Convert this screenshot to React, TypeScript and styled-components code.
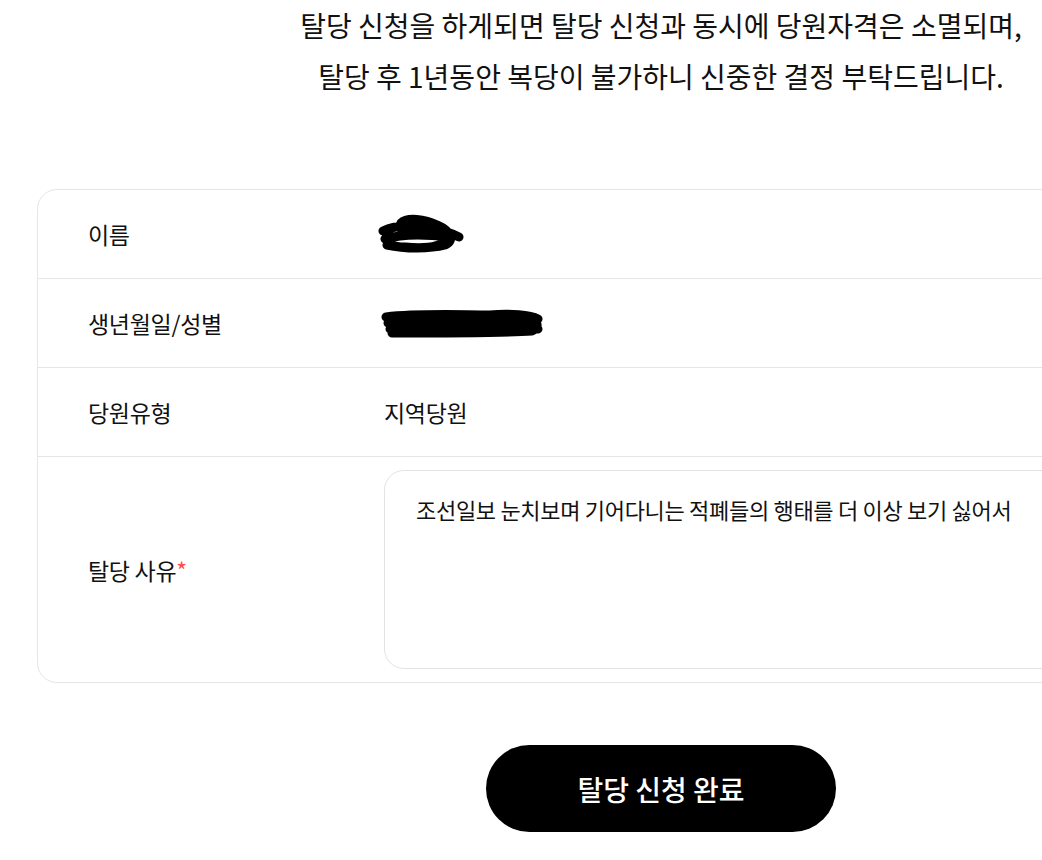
import React from "react";
import styled, { createGlobalStyle } from "styled-components";

const Global = createGlobalStyle`
  html, body { margin: 0; padding: 0; background: #fff; overflow: hidden; }
  body { font-family: "Noto Sans CJK KR", "Noto Sans", sans-serif; color: #111; }
`;

const Page = styled.div`
  width: 1248px;
  margin-left: 37px;
  display: flex;
  flex-direction: column;
  align-items: stretch;
`;

const Notice = styled.p`
  margin: 0 0 87px;
  text-align: center;
  font-size: 28px;
  line-height: 51px;
  letter-spacing: 0;
  color: #111;
`;

const Table = styled.div`
  border: 1px solid #e6e6e6;
  border-radius: 20px;
  display: flex;
  flex-direction: column;
`;

const Row = styled.div<{ $tall?: boolean }>`
  display: grid;
  grid-template-columns: 346px 1fr;
  align-items: center;
  min-height: ${(p) => (p.$tall ? "225px" : "88px")};
  & + & { border-top: 1px solid #e6e6e6; }
`;

const Label = styled.div`
  padding-left: 50px;
  font-size: 23px;
  letter-spacing: -0.3px;
`;

const Value = styled.div`
  font-size: 23px;
  letter-spacing: -0.3px;
  display: flex;
  align-items: center;
`;

const Req = styled.span`
  color: #ff4b4b;
`;

const Reason = styled.textarea`
  box-sizing: border-box;
  width: 100%;
  height: 199px;
  margin: 0;
  border: 1px solid #e3e3e3;
  border-radius: 20px;
  padding: 23px 31px;
  font-family: "Noto Sans CJK KR", "Noto Sans", sans-serif;
  font-size: 22px;
  line-height: 30px;
  letter-spacing: -0.3px;
  color: #111;
  resize: none;
  outline: none;
  display: block;
`;

const ButtonRow = styled.div`
  display: flex;
  justify-content: center;
  margin-top: 62px;
`;

const Submit = styled.button`
  width: 350px;
  height: 87px;
  border: none;
  border-radius: 44px;
  background: #000;
  color: #fff;
  font-family: "Noto Sans CJK KR", "Noto Sans", sans-serif;
  font-size: 28px;
  font-weight: 500;
  cursor: pointer;
`;

const Scribble = ({ w, h, d }: { w: number; h: number; d: string }) => (
  <svg width={w} height={h} viewBox={`0 0 ${w} ${h}`} style={{ display: "block" }}>
    <path d={d} fill="none" stroke="#000" strokeWidth={9} strokeLinecap="round" strokeLinejoin="round" />
  </svg>
);

export default function App() {
  return (
    <>
      <Global />
      <Page>
        <Notice>
          탈당 신청을 하게되면 탈당 신청과 동시에 당원자격은 소멸되며,
          <br />
          탈당 후 1년동안 복당이 불가하니 신중한 결정 부탁드립니다.
        </Notice>
        <Table>
          <Row>
            <Label>이름</Label>
            <Value style={{ marginLeft: -9 }}>
              <Scribble
                w={90}
                h={42}
                d="M8 18 C20 12 40 12 60 16 C72 18 80 22 84 24 M10 26 C30 20 55 22 75 24 M12 32 C30 36 55 36 70 32 C80 28 76 18 62 12 C50 6 32 4 26 10 C22 16 28 20 40 20 M14 22 C12 30 16 34 30 34 C50 36 66 34 74 26"
              />
            </Value>
          </Row>
          <Row>
            <Label>생년월일/성별</Label>
            <Value style={{ marginLeft: -4 }}>
              <Scribble
                w={165}
                h={32}
                d="M6 10 C40 6 80 8 110 8 C130 6 150 8 158 12 M8 16 C50 14 100 14 156 14 M10 22 C50 20 110 20 158 22 M12 26 C60 26 120 26 152 24 C160 20 158 14 150 12"
              />
            </Value>
          </Row>
          <Row>
            <Label>당원유형</Label>
            <Value>지역당원</Value>
          </Row>
          <Row $tall>
            <Label>
              탈당 사유<Req>*</Req>
            </Label>
            <Value>
              <Reason defaultValue="조선일보 눈치보며 기어다니는 적폐들의 행태를 더 이상 보기 싫어서" />
            </Value>
          </Row>
        </Table>
        <ButtonRow>
          <Submit>탈당 신청 완료</Submit>
        </ButtonRow>
      </Page>
    </>
  );
}
